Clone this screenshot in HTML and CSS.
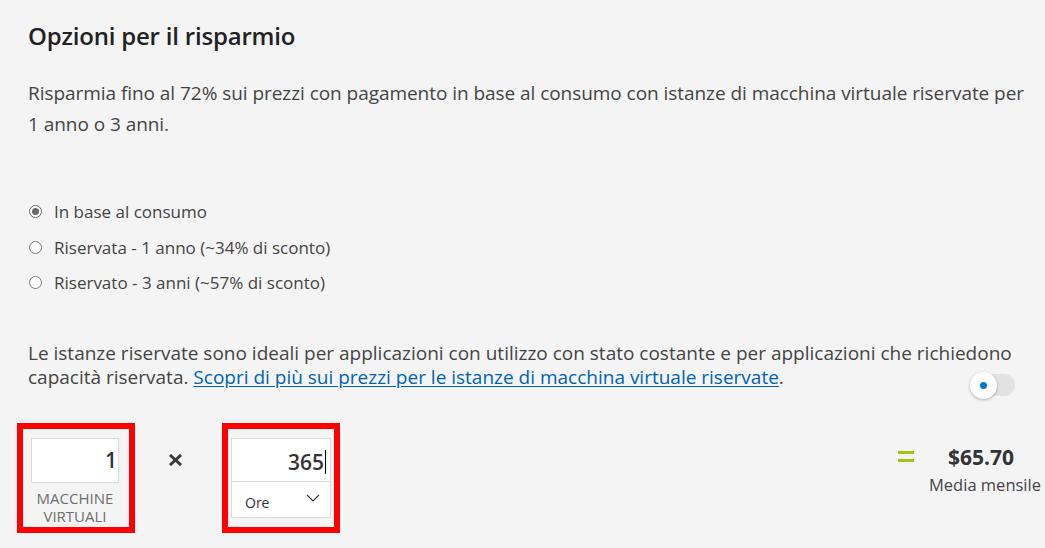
FILE: index.html
```html
<!DOCTYPE html>
<html lang="it">
<head>
<meta charset="utf-8">
<title>Opzioni per il risparmio</title>
<link rel="stylesheet" href="styles.css">
</head>
<body>
<div class="page">
  <h2 class="title">Opzioni per il risparmio</h2>
  <p class="intro">Risparmia fino al 72% sui prezzi con pagamento in base al consumo con istanze di macchina virtuale riservate per 1 anno o 3 anni.</p>

  <ul class="radios">
    <li class="radio-item"><span class="radio checked"></span><span>In base al consumo</span></li>
    <li class="radio-item"><span class="radio"></span><span>Riservata - 1 anno (~34% di sconto)</span></li>
    <li class="radio-item"><span class="radio"></span><span>Riservato - 3 anni (~57% di sconto)</span></li>
  </ul>

  <p class="note">Le istanze riservate sono ideali per applicazioni con utilizzo con stato costante e per applicazioni che richiedono capacità riservata. <a class="link" href="#">Scopri di più sui prezzi per le istanze di macchina virtuale riservate</a>.</p>

  <div class="toggle-row">
    <span class="toggle"><span class="knob"><span class="dot"></span></span></span>
  </div>

  <div class="calc">
    <div class="box box-vm">
      <div class="field num">1</div>
      <div class="field-label">MACCHINE<br>VIRTUALI</div>
    </div>
    <div class="times">
      <svg width="15" height="12" viewBox="0 0 15 12"><path d="M2 1 L13 11 M13 1 L2 11" stroke="#3a3a3a" stroke-width="3" stroke-linecap="butt"/></svg>
    </div>
    <div class="box box-hours">
      <div class="combo">
        <div class="combo-num">365<span class="caret"></span></div>
        <div class="combo-select"><span>Ore</span>
          <svg width="14" height="8" viewBox="0 0 14 8"><path d="M1 1 L7 7 L13 1" fill="none" stroke="#333" stroke-width="1.1"/></svg>
        </div>
      </div>
    </div>
    <div class="spacer"></div>
    <div class="equals"><span></span><span></span></div>
    <div class="result">
      <div class="price">$65.70</div>
      <div class="result-label">Media mensile</div>
    </div>
  </div>
</div>
</body>
</html>
```

FILE: styles.css
```css
* { box-sizing: border-box; }
html, body { margin: 0; padding: 0; }
body {
  background: #f4f4f4;
  font-family: "Open Sans", "Noto Sans", "DejaVu Sans", sans-serif;
  color: #3b3b3b;
  width: 1045px;
  height: 548px;
  overflow: hidden;
}
.page {
  padding: 21px 15px 0 28px;
}
.title {
  margin: 0;
  font-size: 24px;
  font-weight: 600;
  color: #222;
  line-height: 30px;
  letter-spacing: -0.2px;
}
.intro {
  margin: 26.5px 0 0 0;
  font-size: 19px;
  line-height: 31px;
  color: #444;
  letter-spacing: -0.05px;
}
.radios {
  list-style: none;
  margin: 54.5px 0 0 0;
  padding: 0;
}
.radio-item {
  display: flex;
  align-items: center;
  height: 35.5px;
  font-size: 17px;
  color: #444;
}
.radio {
  width: 13px;
  height: 13px;
  border: 1px solid #777;
  border-radius: 50%;
  margin: 0 12px 0 1px;
  background: #fff;
  display: flex;
  align-items: center;
  justify-content: center;
  flex: none;
}
.radio.checked { border-color: #666; }
.radio.checked::after {
  content: "";
  width: 7px;
  height: 7px;
  border-radius: 50%;
  background: #6a6a6a;
}
.note {
  margin: 40.5px 0 0 0;
  font-size: 19px;
  line-height: 24px;
  color: #444;
  letter-spacing: 0;
}
.link {
  display: inline-block;
  line-height: 24px;
  height: 24px;
  color: #0063af;
  text-decoration: underline;
  text-underline-offset: 2px;
}
.toggle-row {
  display: flex;
  justify-content: flex-end;
  margin-top: -15px;
  padding-right: 15px;
}
.toggle {
  width: 42px;
  height: 22px;
  border-radius: 11px;
  background: #e2e2e2;
  display: flex;
  align-items: center;
}
.knob {
  width: 27px;
  height: 27px;
  border-radius: 50%;
  background: #fff;
  box-shadow: 0 1px 3px rgba(0,0,0,0.3);
  display: flex;
  align-items: center;
  justify-content: center;
  margin-left: -3px;
}
.dot { width: 7px; height: 7px; border-radius: 50%; background: #0078d4; }
.calc {
  display: flex;
  align-items: flex-start;
  margin: 27px -12px 0 -11px;
}
.box {
  border: 6px solid #ff0000;
  width: 118px;
  height: 110px;
  flex: none;
}
.box-vm { padding: 9px 10px 0 8px; }
.field {
  background: #fff;
  border: 1px solid #dcdcdc;
  height: 45px;
}
.num {
  text-align: right;
  font-size: 21px;
  font-weight: 600;
  color: #333;
  line-height: 43px;
  padding-right: 1px;
}
.field-label {
  text-align: center;
  font-size: 15px;
  line-height: 18px;
  color: #6e6e6e;
  margin-top: 6px;
}
.times {
  width: 87px;
  display: flex;
  justify-content: center;
  padding: 31px 6px 0 0;
}
.box-hours { padding: 9px 3px 0 3px; }
.combo {
  background: #fff;
  border: 1px solid #dcdcdc;
}
.combo-num {
  height: 43px;
  border-bottom: 1px solid #dcdcdc;
  font-size: 21px;
  font-weight: 600;
  color: #333;
  padding-right: 4px;
  display: flex;
  justify-content: flex-end;
  align-items: center;
  padding-top: 3px;
}
.caret {
  display: inline-block;
  width: 1px;
  height: 24px;
  background: #000;
  margin-left: 1px;
}
.combo-select {
  height: 35px;
  display: flex;
  align-items: center;
  justify-content: space-between;
  padding: 5px 10px 0 13px;
  font-size: 14px;
  color: #333;
}
.combo-select svg { margin-top: -8px; }
.spacer { flex: 1; }
.equals {
  display: flex;
  flex-direction: column;
  gap: 5px;
  padding-top: 28px;
  margin-right: 14px;
}
.equals span { width: 16px; height: 3px; background: #a2c50f; display: block; }
.result {
  text-align: center;
  width: 114px;
  padding-top: 19px;
}
.price {
  font-size: 21px;
  font-weight: 700;
  color: #333;
  line-height: 30px;
  padding-right: 8px;
}
.result-label {
  font-size: 16.5px;
  line-height: 22px;
  color: #444;
  margin-top: 2px;
}
```
